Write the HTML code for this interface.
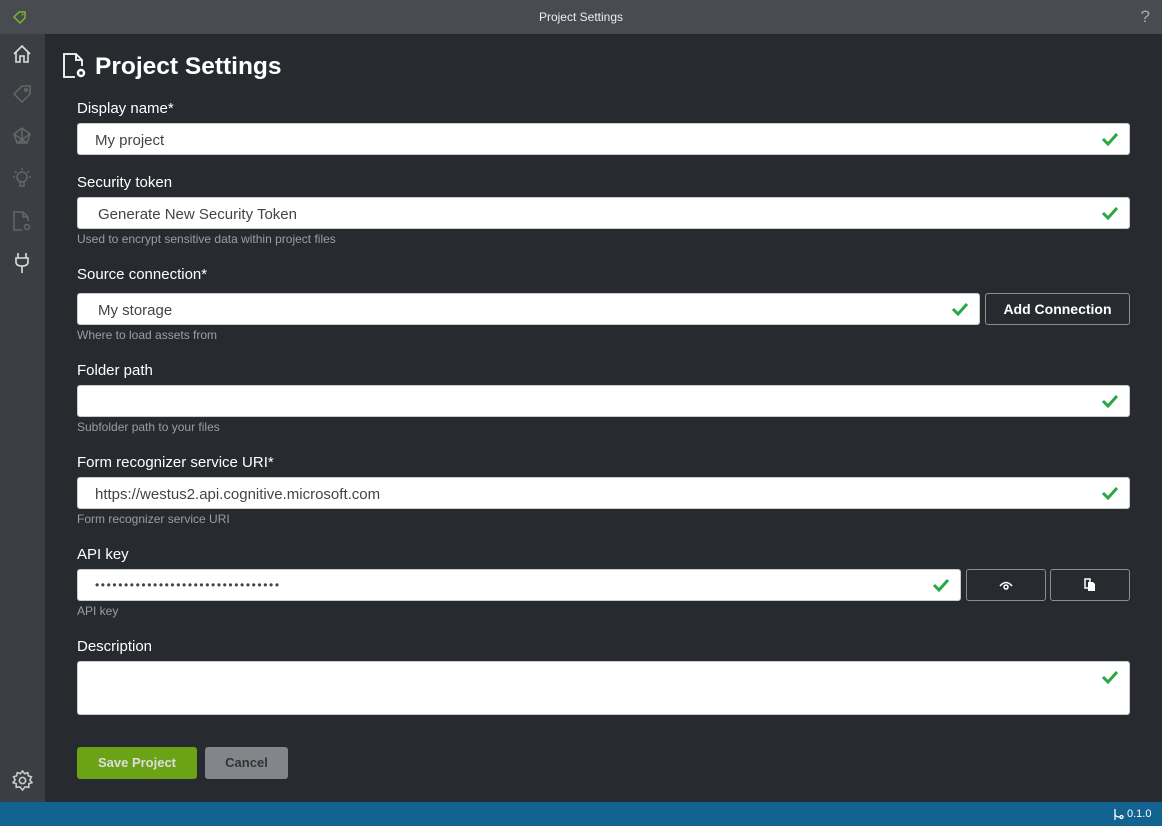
<!DOCTYPE html>
<html><head><style>
*{box-sizing:border-box;margin:0;padding:0}
body{width:1162px;height:826px;overflow:hidden;background:#272b30;font-family:"Liberation Sans",sans-serif;position:relative;color:#fff}
.tb{position:absolute;left:0;top:0;width:1162px;height:34px;background:#484b50;font-size:12px;text-align:center;line-height:34px;color:#eee}
.sb{position:absolute;left:0;top:34px;width:45px;height:768px;background:#3b3e43}
.st{position:absolute;left:0;top:802px;width:1162px;height:24px;background:#136391;font-size:12px}
.lbl{position:absolute;left:77px;font-size:15px;color:#fff}
.in{position:absolute;left:77px;height:32px;background:#fff;border:1px solid #ccc;border-radius:3px;color:#444;font-size:15px;line-height:33px;padding-left:17px}
.hint{position:absolute;left:77px;font-size:12px;color:#9a9ea4}
.ck{position:absolute;right:10px;top:8px}
.btn{position:absolute;height:32px;border:1px solid #8a8d91;border-radius:3px;font-size:14px;font-weight:bold;text-align:center;line-height:30px;color:#fff}
</style></head><body>
<div class="tb">Project Settings
<svg style="position:absolute;left:12px;top:10px" width="16" height="14" viewBox="0 0 16 14"><path d="M2 7 L7 2 H13 V8 L8 13 Z" fill="none" stroke="#77b82a" stroke-width="1.5"/><circle cx="10.5" cy="4.5" r="1" fill="#77b82a"/></svg>
<span style="position:absolute;right:12px;top:0;font-size:17px;color:#aaa">?</span></div>
<div class="sb">
<svg style="position:absolute;left:12px;top:10px" width="20" height="20" viewBox="0 0 20 20" fill="none" stroke="#ddd" stroke-width="1.6"><path d="M2 10 L10 2 L18 10 M4 8 V18 H8 V12 H12 V18 H16 V8"/></svg>
<svg style="position:absolute;left:12px;top:50px" width="20" height="20" viewBox="0 0 20 20" fill="none" stroke="#666" stroke-width="1.5"><path d="M2 10 L10 2 H18 V10 L10 18 Z"/><circle cx="14" cy="6" r="1.3"/></svg>
<svg style="position:absolute;left:12px;top:92px" width="20" height="20" viewBox="0 0 20 20" fill="none" stroke="#666" stroke-width="1.5"><path d="M10 2 L18 8 L15 17 H5 L2 8 Z M2 8 L15 17 M18 8 L5 17 M10 2 V17"/></svg>
<svg style="position:absolute;left:12px;top:134px" width="20" height="20" viewBox="0 0 20 20" fill="none" stroke="#666" stroke-width="1.5"><circle cx="10" cy="9" r="5"/><path d="M8 14 V18 H12 V14 M10 0 V2 M1 9 H3 M17 9 H19 M3 3 L4.5 4.5 M17 3 L15.5 4.5"/></svg>
<svg style="position:absolute;left:12px;top:176px" width="20" height="22" viewBox="0 0 20 22" fill="none" stroke="#666" stroke-width="1.5"><path d="M10 20 H2 V2 H11 L16 7 V11 M11 2 V7 H16"/><circle cx="15" cy="17" r="2.5"/></svg>
<svg style="position:absolute;left:14px;top:218px" width="16" height="22" viewBox="0 0 16 22" fill="none" stroke="#ddd" stroke-width="1.6"><path d="M4 1 V6 M12 1 V6 M2 6 H14 V10 Q14 14 8 14 Q2 14 2 10 Z M8 14 V21"/></svg>
<svg style="position:absolute;left:12px;top:736px" width="21" height="21" viewBox="0 0 20 20" fill="none" stroke="#ccc" stroke-width="1.5"><circle cx="10" cy="10" r="3"/><path d="M10 1 L12 3.5 L15 2.5 L15.5 5.5 L18.5 6.5 L17 9.5 L19 12 L16 13 L16 16.5 L12.5 16 L10 19 L7.5 16 L4 16.5 L4 13 L1 12 L3 9.5 L1.5 6.5 L4.5 5.5 L5 2.5 L8 3.5 Z"/></svg>
</div>
<svg style="position:absolute;left:62px;top:52px" width="26" height="28" viewBox="0 0 26 28" fill="none" stroke="#fff" stroke-width="1.8"><path d="M13 25 H2 V2 H14 L20 8 V14 M14 2 V8 H20"/><circle cx="19" cy="21" r="3" stroke-width="2.5"/></svg>
<div style="position:absolute;left:95px;top:53px;font-size:24.5px;font-weight:bold">Project Settings</div>

<div class="lbl" style="top:100px">Display name*</div>
<div class="in" style="top:123px;width:1053px">My project<svg class="ck" width="18" height="14" viewBox="0 0 18 14"><path d="M2 7 L7 12 L16 2" fill="none" stroke="#28a745" stroke-width="3"/></svg></div>

<div class="lbl" style="top:174px">Security token</div>
<div class="in" style="top:197px;width:1053px;padding-left:20px">Generate New Security Token<svg class="ck" width="18" height="14" viewBox="0 0 18 14"><path d="M2 7 L7 12 L16 2" fill="none" stroke="#28a745" stroke-width="3"/></svg></div>
<div class="hint" style="top:232px">Used to encrypt sensitive data within project files</div>

<div class="lbl" style="top:266px">Source connection*</div>
<div class="in" style="top:293px;width:903px;padding-left:20px">My storage<svg class="ck" width="18" height="14" viewBox="0 0 18 14"><path d="M2 7 L7 12 L16 2" fill="none" stroke="#28a745" stroke-width="3"/></svg></div>
<div class="btn" style="left:985px;top:293px;width:145px">Add Connection</div>
<div class="hint" style="top:328px">Where to load assets from</div>

<div class="lbl" style="top:362px">Folder path</div>
<div class="in" style="top:385px;width:1053px"><svg class="ck" width="18" height="14" viewBox="0 0 18 14"><path d="M2 7 L7 12 L16 2" fill="none" stroke="#28a745" stroke-width="3"/></svg></div>
<div class="hint" style="top:420px">Subfolder path to your files</div>

<div class="lbl" style="top:454px">Form recognizer service URI*</div>
<div class="in" style="top:477px;width:1053px">https://westus2.api.cognitive.microsoft.com<svg class="ck" width="18" height="14" viewBox="0 0 18 14"><path d="M2 7 L7 12 L16 2" fill="none" stroke="#28a745" stroke-width="3"/></svg></div>
<div class="hint" style="top:512px">Form recognizer service URI</div>

<div class="lbl" style="top:546px">API key</div>
<div class="in" style="top:569px;width:884px;font-size:12px;letter-spacing:1.6px;line-height:30px">&#8226;&#8226;&#8226;&#8226;&#8226;&#8226;&#8226;&#8226;&#8226;&#8226;&#8226;&#8226;&#8226;&#8226;&#8226;&#8226;&#8226;&#8226;&#8226;&#8226;&#8226;&#8226;&#8226;&#8226;&#8226;&#8226;&#8226;&#8226;&#8226;&#8226;&#8226;&#8226;<svg class="ck" width="18" height="14" viewBox="0 0 18 14"><path d="M2 7 L7 12 L16 2" fill="none" stroke="#28a745" stroke-width="3"/></svg></div>
<div class="btn" style="left:966px;top:569px;width:80px"><svg width="16" height="12" viewBox="0 0 16 12" style="margin-top:9px"><path d="M2 7 Q8 0 14 7" fill="none" stroke="#fff" stroke-width="1.5"/><circle cx="8" cy="8" r="2" fill="none" stroke="#fff" stroke-width="1.5"/></svg></div>
<div class="btn" style="left:1050px;top:569px;width:80px"><svg width="14" height="14" viewBox="0 0 14 14" style="margin-top:8px"><path d="M2 1 H7 V10 H2 Z" fill="none" stroke="#fff" stroke-width="1.5"/><path d="M5 4 H10 L12 6 V13 H5 Z" fill="#fff"/></svg></div>
<div class="hint" style="top:604px">API key</div>

<div class="lbl" style="top:638px">Description</div>
<div class="in" style="top:661px;width:1053px;height:54px"><svg class="ck" width="18" height="14" viewBox="0 0 18 14"><path d="M2 7 L7 12 L16 2" fill="none" stroke="#28a745" stroke-width="3"/></svg></div>

<div class="btn" style="left:77px;top:747px;width:120px;background:#6aa316;border-color:#6aa316;color:#ddd;font-weight:bold;font-size:13px">Save Project</div>
<div class="btn" style="left:205px;top:747px;width:83px;background:#82868b;border-color:#82868b;color:#333;font-size:13px">Cancel</div>

<div class="st"><svg style="position:absolute;left:1112px;top:6px" width="12" height="13" viewBox="0 0 12 13" fill="none" stroke="#fff" stroke-width="1.3"><path d="M3 1 V12 M3 6 Q3 9 8 9"/><circle cx="9.5" cy="9" r="1.5"/></svg><span style="position:absolute;left:1127px;top:6px;color:#fff;font-size:11px">0.1.0</span></div>
</body></html>
